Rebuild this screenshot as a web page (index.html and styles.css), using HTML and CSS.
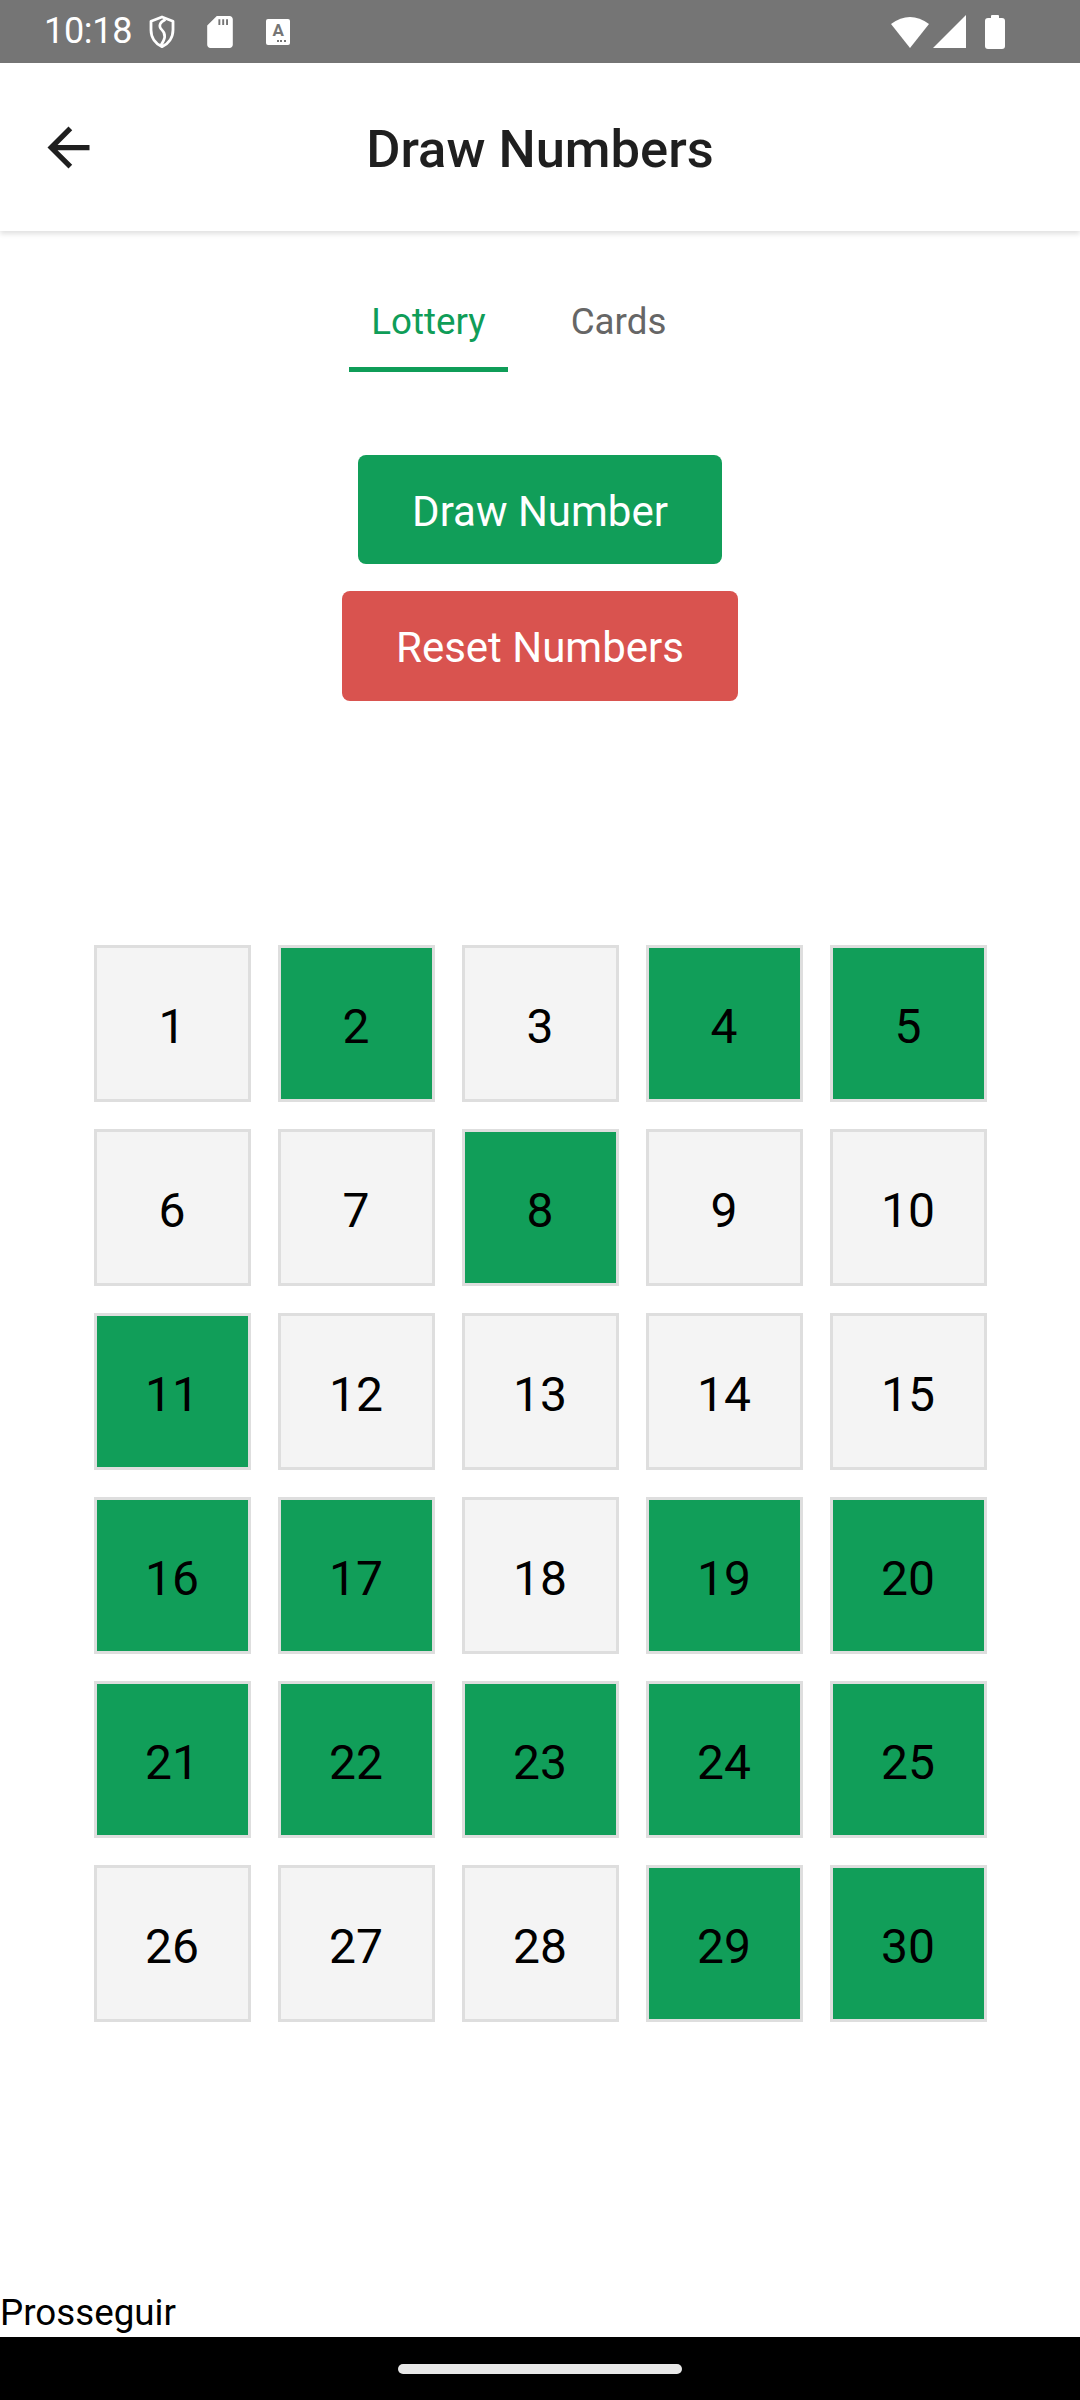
FILE: index.html
```html
<!DOCTYPE html>
<html>
<head>
<meta charset="utf-8">
<link rel="stylesheet" href="styles.css">
</head>
<body>
<div class="page">
  <div class="status">
    <div class="status-left">
      <span class="clock">10:18</span>
      <svg class="ico-shield" viewBox="0 0 30 34" width="30" height="34"><path d="M15 2 4 6.2V15c0 7.6 4.6 13.8 11 16.6 6.4-2.8 11-9 11-16.6V6.2z" fill="none" stroke="#fff" stroke-width="2.8" stroke-linejoin="round"/><path d="M18.5 4.5c-6 2.8-7.4 6.8-3.6 10.4 3.8 3.6 3.6 9.2-1.2 15.6" fill="none" stroke="#fff" stroke-width="2.6"/></svg>
      <svg class="ico-sd" viewBox="4 2 16 20" width="26" height="32"><path fill="#fff" fill-rule="evenodd" d="M18 2h-8L4 8v12c0 1.1.9 2 2 2h12c1.1 0 2-.9 2-2V4c0-1.1-.9-2-2-2zM12.2 4h-1.2v3.6h1.2zM14.6 4h-1.2v3.6h1.2zM17 4h-1.2v3.6H17z"/></svg>
      <span class="ico-a">A<i class="dots"></i></span>
    </div>
    <div class="status-right">
      <svg viewBox="0 0 40 34" width="40" height="34"><path d="M1 9 Q20 -5 39 9 L20 33 Z" fill="#fff"/></svg>
      <svg viewBox="0 0 33 34" width="33" height="34"><path d="M0 33 L33 0 V33 Z" fill="#fff"/></svg>
      <svg viewBox="0 0 20 34" width="20" height="34"><rect x="6" y="0" width="8" height="4" rx="1" fill="#fff"/><rect x="0" y="3" width="20" height="31" rx="3" fill="#fff"/></svg>
    </div>
  </div>

  <header class="appbar">
    <svg class="back" viewBox="0 0 24 24" width="63" height="63"><path fill="#1f1f1f" d="M20 11H7.83l5.59-5.59L12 4l-8 8 8 8 1.41-1.41L7.83 13H20v-2z"/></svg>
    <h1 class="title">Draw Numbers</h1>
  </header>

  <nav class="tabs">
    <div class="tab active"><span>Lottery</span></div>
    <div class="tab"><span>Cards</span></div>
  </nav>

  <div class="actions">
    <button class="btn btn-green">Draw Number</button>
    <button class="btn btn-red">Reset Numbers</button>
  </div>

  <div class="grid">
    <div class="cell">1</div>
    <div class="cell on">2</div>
    <div class="cell">3</div>
    <div class="cell on">4</div>
    <div class="cell on">5</div>
    <div class="cell">6</div>
    <div class="cell">7</div>
    <div class="cell on">8</div>
    <div class="cell">9</div>
    <div class="cell">10</div>
    <div class="cell on">11</div>
    <div class="cell">12</div>
    <div class="cell">13</div>
    <div class="cell">14</div>
    <div class="cell">15</div>
    <div class="cell on">16</div>
    <div class="cell on">17</div>
    <div class="cell">18</div>
    <div class="cell on">19</div>
    <div class="cell on">20</div>
    <div class="cell on">21</div>
    <div class="cell on">22</div>
    <div class="cell on">23</div>
    <div class="cell on">24</div>
    <div class="cell on">25</div>
    <div class="cell">26</div>
    <div class="cell">27</div>
    <div class="cell">28</div>
    <div class="cell on">29</div>
    <div class="cell on">30</div>
  </div>

  <div class="spacer"></div>
  <div class="proceed">Prosseguir</div>
  <div class="navbar"><div class="handle"></div></div>
</div>
</body>
</html>
```

FILE: styles.css
```css
* { box-sizing: border-box; }
html, body { margin: 0; padding: 0; background: #fff; }
body { font-family: Roboto, "Noto Sans", sans-serif; }

.page {
  width: 1080px;
  height: 2400px;
  display: flex;
  flex-direction: column;
  overflow: hidden;
}

.status {
  height: 63px;
  background: #757575;
  display: flex;
  justify-content: space-between;
  align-items: center;
  padding: 0 75px 0 44px;
  color: #fff;
}
.status-left { display: flex; align-items: center; }
.clock { font-size: 36px; line-height: 63px; letter-spacing: -0.3px; }
.ico-shield { margin-left: 15px; }
.ico-sd { margin-left: 30px; }
.ico-a {
  position: relative;
  margin-left: 33px;
  width: 24px;
  height: 26px;
  background: #fff;
  color: #757575;
  border-radius: 2px;
  font-size: 17px;
  font-weight: 700;
  line-height: 22px;
  text-align: center;
}
.dots {
  position: absolute;
  right: 4px;
  bottom: 3px;
  width: 9px;
  height: 2px;
  background: repeating-linear-gradient(90deg, #757575 0 2px, transparent 2px 3.5px);
}
.status-right { display: flex; align-items: center; gap: 3px; }
.status-right svg:last-child { margin-left: 16px; }

.appbar {
  height: 168px;
  position: relative;
  display: flex;
  align-items: center;
  justify-content: center;
  background: #fff;
  box-shadow: 0 3px 5px rgba(0,0,0,0.12);
  z-index: 1;
}
.back { position: absolute; left: 37px; top: 53px; }
.title {
  margin: 0;
  font-size: 52.5px;
  font-weight: 500;
  color: #1f1f1f;
  line-height: 62px;
  padding-top: 3px;
}

.tabs {
  display: flex;
  padding-left: 349px;
  padding-top: 69px;
  gap: 31px;
}
.tab {
  width: 159px;
  display: flex;
  flex-direction: column;
  align-items: center;
  font-size: 36.75px;
  line-height: 43px;
  color: #666;
  padding-bottom: 24px;
  border-bottom: 5px solid transparent;
}
.tab.active {
  color: #0f9d58;
  border-bottom-color: #0f9d58;
}

.actions {
  display: flex;
  flex-direction: column;
  align-items: center;
  gap: 27px;
  margin-top: 83px;
}
.btn {
  border: none;
  height: 109px;
  padding: 3px 54px 0;
  border-radius: 8px;
  font-family: Roboto, sans-serif;
  font-size: 42px;
  color: #fff;
}
.btn-green { background: #119e59; }
.btn-red { background: #d9534f; height: 110px; }

.grid {
  margin: 244px auto 0;
  display: grid;
  grid-template-columns: repeat(5, 157px);
  grid-auto-rows: 157px;
  gap: 27px;
}
.cell {
  background: #f4f4f4;
  border: 3px solid #dedede;
  display: flex;
  align-items: center;
  justify-content: center;
  padding-top: 5px;
  font-size: 48px;
  color: #000;
}
.cell.on { background: #119e59; }

.spacer { flex: 1; }
.proceed {
  font-size: 36.75px;
  line-height: 45px;
  color: #000;
  margin-bottom: 2px;
}
.navbar {
  height: 63px;
  background: #000;
  display: flex;
  justify-content: center;
  padding-top: 27px;
}
.handle {
  width: 284px;
  height: 10px;
  border-radius: 5px;
  background: #e8e8e8;
}
```
